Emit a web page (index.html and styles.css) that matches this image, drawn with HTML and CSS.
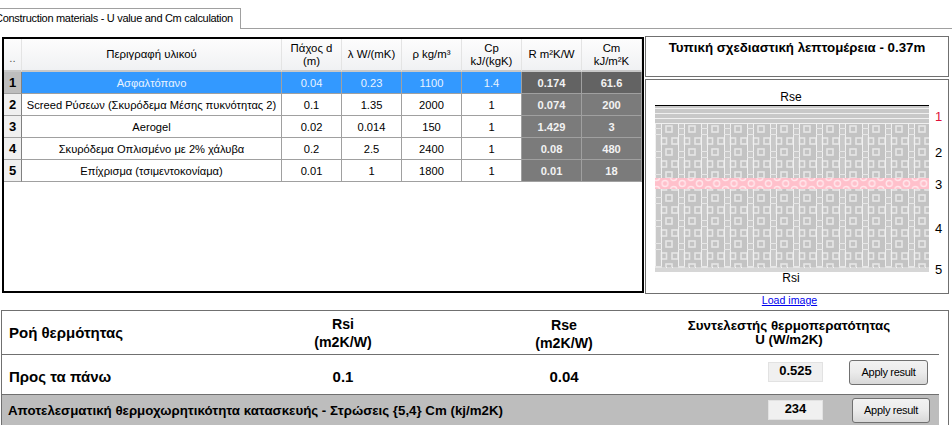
FILE: index.html
```html
<!DOCTYPE html>
<html lang="el">
<head>
<meta charset="utf-8">
<title>Construction materials</title>
<link rel="stylesheet" href="styles.css">
</head>
<body>
<div class="page">
  <div class="tabbar"><div class="tab">Construction materials - U value and Cm calculation</div></div>
  <div class="top">
    <div class="gridbox">
      <table class="grid">
        <colgroup><col class="c-h"><col class="c-d"><col class="c-n"><col class="c-n"><col class="c-n"><col class="c-n"><col class="c-n"><col class="c-n"></colgroup>
        <thead>
          <tr><th class="dots">..</th><th>Περιγραφή υλικού</th><th>Πάχος d<br>(m)</th><th>λ W/(mK)</th><th>ρ kg/m³</th><th>Cp<br>kJ/(kgK)</th><th>R m²K/W</th><th>Cm<br>kJ/m²K</th></tr>
        </thead>
        <tbody>
          <tr class="sel"><td class="rh">1</td><td>Ασφαλτόπανο</td><td>0.04</td><td>0.23</td><td>1100</td><td>1.4</td><td class="calc">0.174</td><td class="calc">61.6</td></tr>
          <tr><td class="rh">2</td><td>Screed Ρύσεων (Σκυρόδεμα Μέσης πυκνότητας 2)</td><td>0.1</td><td>1.35</td><td>2000</td><td>1</td><td class="calc">0.074</td><td class="calc">200</td></tr>
          <tr><td class="rh">3</td><td>Aerogel</td><td>0.02</td><td>0.014</td><td>150</td><td>1</td><td class="calc">1.429</td><td class="calc">3</td></tr>
          <tr><td class="rh">4</td><td>Σκυρόδεμα Οπλισμένο με 2% χάλυβα</td><td>0.2</td><td>2.5</td><td>2400</td><td>1</td><td class="calc">0.08</td><td class="calc">480</td></tr>
          <tr><td class="rh">5</td><td>Επίχρισμα (τσιμεντοκονίαμα)</td><td>0.01</td><td>1</td><td>1800</td><td>1</td><td class="calc">0.01</td><td class="calc">18</td></tr>
        </tbody>
      </table>
    </div>
    <div class="side">
      <div class="titlebox">Τυπική σχεδιαστική λεπτομέρεια - 0.37m</div>
      <div class="drawbox">
        <div class="drawing">
          <div class="rse">Rse</div>
          <svg class="section" width="274" height="167" viewBox="0 0 274 167" aria-hidden="true">
            <defs>
              <pattern id="stripes" width="274" height="5" patternUnits="userSpaceOnUse">
                <rect width="274" height="5" fill="#c8c8c8"/>
                <rect y="3" width="274" height="1" fill="#f0f0f0"/>
              </pattern>
              <pattern id="blocks" x="0" y="15" width="23" height="23" patternUnits="userSpaceOnUse">
                <rect width="23" height="23" fill="#c3c3c3"/>
                <rect x="1" width="5" height="23" fill="#c9c9c9"/>
                <g fill="none" stroke="#e6e6e6" stroke-width="1.6">
                  <rect x="11" y="6" width="6" height="6"/>
                  <rect x="6.5" y="18" width="5" height="6"/>
                  <rect x="17" y="18" width="6" height="6"/>
                  <rect x="6.5" y="-5" width="5" height="6"/>
                  <rect x="17" y="-5" width="6" height="6"/>
                </g>
                <rect x="0" width="1" height="23" fill="#f0f0f0"/>
                <rect x="6" width="1" height="23" fill="#f0f0f0"/>
                <rect x="0" y="8" width="7" height="1" fill="#e6e6e6"/>
                <rect x="0" y="14" width="7" height="1" fill="#e6e6e6"/>
              </pattern>
              <pattern id="pinks" x="0" y="73" width="17.25" height="11" patternUnits="userSpaceOnUse">
                <rect width="18" height="11" fill="#ffc0cb"/>
                <g fill="none" stroke="#ffe6eb" stroke-width="1.4">
                  <circle cx="10" cy="5.5" r="3"/>
                  <circle cx="1.5" cy="-0.5" r="3"/>
                  <circle cx="18.75" cy="-0.5" r="3"/>
                  <circle cx="1.5" cy="11.5" r="3"/>
                  <circle cx="18.75" cy="11.5" r="3"/>
                </g>
              </pattern>
              <pattern id="plaster" x="0" y="162" width="23" height="5" patternUnits="userSpaceOnUse">
                <rect width="23" height="5" fill="#d6d6d6"/>
                <rect x="0" y="0" width="7" height="1" fill="#e6e6e6"/>
                <rect x="11" y="0" width="1" height="1" fill="#f4f4f4"/>
                <rect x="17" y="0" width="1" height="1" fill="#f4f4f4"/>
              </pattern>
            </defs>
            <rect width="274" height="1" fill="#000"/>
            <rect y="1" width="274" height="18" fill="url(#stripes)"/>
            <rect y="19" width="274" height="54" fill="url(#blocks)"/>
            <rect y="73" width="274" height="11" fill="url(#pinks)"/>
            <rect y="84" width="274" height="78" fill="url(#blocks)"/>
            <rect y="162" width="274" height="5" fill="url(#plaster)"/>
          </svg>
          <div class="rsi">Rsi</div>
          <span class="num n1">1</span><span class="num n2">2</span><span class="num n3">3</span><span class="num n4">4</span><span class="num n5">5</span>
        </div>
      </div>
      <a class="load" href="#">Load image</a>
    </div>
  </div>
  <div class="summary">
    <div class="row row-head">
      <div class="lbl">Ροή θερμότητας</div>
      <div class="rsi-col">Rsi<br>(m2K/W)</div>
      <div class="rse-col">Rse<br>(m2K/W)</div>
      <div class="u-col">Συντελεστής θερμοπερατότητας<br>U (W/m2K)</div>
    </div>
    <div class="row row-val">
      <div class="lbl">Προς τα πάνω</div>
      <div class="rsi-col">0.1</div>
      <div class="rse-col">0.04</div>
      <div class="out"><span class="value">0.525</span><button class="btn">Apply result</button></div>
    </div>
    <div class="row row-cm">
      <div class="lbl-cm">Αποτελεσματική θερμοχωρητικότητα κατασκευής - Στρώσεις {5,4} Cm (kj/m2K)</div>
      <div class="out-cm"><span class="value">234</span><button class="btn">Apply result</button></div>
    </div>
  </div>
</div>
</body>
</html>
```
FILE: styles.css
```css
* { box-sizing: border-box; }
html, body { margin: 0; padding: 0; background: #fff; }
.page {
  width: 952px; height: 425px; overflow: hidden;
  font-family: "Liberation Sans", Arial, sans-serif; font-size: 11px; color: #000;
}
.tabbar { height: 29px; padding-top: 8px; border-bottom: 1px solid #a0a0a0; }
.tab {
  width: 262px; height: 21px; margin-left: -21px; padding: 3px 0 0 8px;
  background: #fff; border: 1px solid #a0a0a0; border-bottom: 0;
  text-align: center; font-size: 11px; letter-spacing: -0.3px; white-space: nowrap; line-height: 13px;
}
.top { display: flex; padding: 8px 0 0 2px; gap: 1px; height: 281px; }
.gridbox { width: 642px; height: 256px; border: 2px solid #000; background: #fff; }
.grid { border-collapse: separate; border-spacing: 0; table-layout: fixed; width: 638px; text-align: center; }
.c-h { width: 18px; } .c-d { width: 260px; } .c-n { width: 60px; }
.grid th {
  height: 33px; font-weight: normal; font-size: 11.4px; line-height: 13px; padding: 0;
  background: linear-gradient(#fdfdfd, #f0f1f3);
  border-right: 1px solid #e4e4e4; border-bottom: 2px solid #c8c8c8;
}
.grid th.dots { vertical-align: bottom; padding-bottom: 5px; color: #555; }
.grid td {
  height: 22px; padding: 0; white-space: nowrap; font-size: 11.15px;
  border-right: 1px solid #a0a0a0; border-bottom: 1px solid #a0a0a0;
}
.grid td.rh { background: #f0f0f0; font-weight: bold; font-size: 13px; border-right-color: #808080; }
.grid td.calc { background: #7b7b7b; color: #f2f2f2; font-weight: bold; }
.sel td { background: #3399ff; color: #e8f3ff; }
.grid .sel td.rh { background: #bdbdbd; color: #000; }
.grid .sel td.calc { background: #636363; }
.side { width: 305px; }
.titlebox {
  width: 304px; height: 41px; margin-top: -1px; border: 1px solid #707070;
  text-align: center; font-weight: bold; font-size: 13.3px; padding-top: 3px; line-height: 15px;
}
.drawbox { width: 304px; height: 215px; margin-top: 2px; border: 1px solid #707070; padding: 25px 0 0 9px; }
.drawing { position: relative; width: 294px; height: 188px; }
.section { display: block; }
.rse, .rsi { width: 272px; text-align: center; font-size: 12px; line-height: 14px; }
.rse { margin-top: -15px; padding-bottom: 1px; height: 15px; }
.rsi { margin-top: -1px; }
.num { position: absolute; left: 280px; font-size: 13px; line-height: 14px; }
.n1 { top: 20px; color: #e0103a; }
.n2 { top: 56px; }
.n3 { top: 88px; }
.n4 { top: 132px; }
.n5 { top: 173px; }
.load { display: block; width: 289px; text-align: center; color: #0000ee; font-size: 10.6px; line-height: 14px; margin-top: -1px; }
.summary {
  margin-left: 1px; width: 948px; height: 115px; border: 1px solid #707070; border-bottom: 0;
  font-weight: bold;
}
.row { display: flex; align-items: center; width: 937px; }
.row-head { height: 44px; border-bottom: 1px solid #707070; font-size: 14.2px; text-align: center; line-height: 18px; }
.row-val { height: 40px; border-bottom: 1px solid #707070; font-size: 15px; text-align: center; }
.row-cm { height: 30px; background: #bdbdbd; }
.lbl { width: 241px; padding-left: 7px; text-align: left; font-size: 15px; }
.rsi-col { width: 200px; }
.rse-col { width: 200px; margin-left: 21px; }
.row-head .rse-col { padding-top: 3px; }
.row-val .lbl, .row-val .rsi-col, .row-val .rse-col { padding-top: 3px; }
.u-col { width: 204px; margin-left: 23px; font-size: 13.35px; line-height: 14px; }
.lbl-cm { width: 766px; padding-left: 6px; font-size: 13.3px; white-space: nowrap; }
.out { display: flex; align-items: center; margin: 0 0 5px 104px; }
.out-cm { display: flex; align-items: center; }
.value {
  display: block; width: 55px; height: 20px; background: #f0f0f0; border: 1px solid #e2e2e2;
  text-align: center; font-size: 13px; line-height: 15px; font-weight: bold;
}
.btn {
  width: 79px; height: 25px; margin-left: 26px; padding: 0; font-family: inherit; font-size: 11px; letter-spacing: -0.3px; color: #000;
  border: 1px solid #707070; border-radius: 3px; background: linear-gradient(#f2f2f2, #ebebeb 50%, #d8d8d8);
}
.out-cm .btn { margin-left: 29px; width: 78px; }
```
